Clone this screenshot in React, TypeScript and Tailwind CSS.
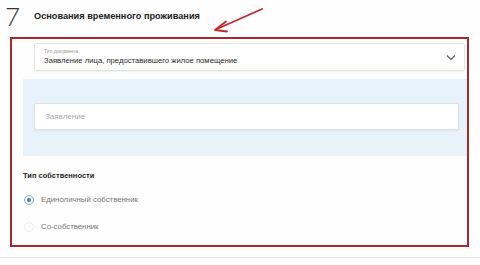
import React from "react";

export default function App() {
  return (
    <div
      className="relative w-[480px] h-[265px] overflow-hidden bg-[#fdfefd]"
      style={{ fontFamily: '"Liberation Sans", Arial, sans-serif' }}
    >
      {/* header */}
      <div className="flex items-center h-[34px] pl-[5px]">
        <span
          className="text-[26px] leading-none font-light text-[#333] w-[29px] -mt-[2px]"
          style={{ fontFamily: 'Lato, "Liberation Sans", sans-serif' }}
        >
          7
        </span>
        <span className="text-[9.2px] font-bold text-[#222] -mt-[1px]">
          Основания временного проживания
        </span>
      </div>

      {/* annotation arrow */}
      <svg
        className="absolute left-[205px] top-[4px]"
        width="62"
        height="32"
        viewBox="0 0 62 32"
      >
        <line x1="57" y1="5" x2="12" y2="25" stroke="#c0282d" strokeWidth="1.8" strokeLinecap="round" />
        <path d="M10 26 L21 17.5 M10 26 L22 27.5" stroke="#c0282d" strokeWidth="1.8" strokeLinecap="round" fill="none" />
      </svg>

      {/* red annotation frame with form */}
      <div className="ml-[10px] mt-[3px] w-[459px] h-[210px] border-2 border-[#a8282c] flex flex-col">
        {/* select */}
        <div className="ml-[22px] mr-[2px] mt-[4px] h-[28px] bg-white border border-[#e4e6e6] rounded-[2px] shadow-[0_1px_2px_rgba(0,0,0,0.06)] flex items-center pl-[9px] pr-[8px]">
          <div className="flex-1 flex flex-col">
            <span className="text-[5px] leading-[6px] text-[#9a9a9a]">Тип документа</span>
            <span className="text-[7.7px] leading-[11px] text-[#2a2a2a] mt-[1px]">
              Заявление лица, предоставившего жилое помещение
            </span>
          </div>
          <svg width="10" height="7" viewBox="0 0 10 7">
            <path d="M1 1.5 L5 5.5 L9 1.5" stroke="#555" strokeWidth="1.1" fill="none" />
          </svg>
        </div>

        {/* blue area */}
        <div className="ml-[11px] mt-[8px] h-[77px] bg-[#e6f3fa] pt-[24px] pl-[11px] pr-[8px]">
          <div className="h-[27px] bg-white border border-[#dfe3e4] rounded-[2px] shadow-[0_1px_2px_rgba(0,0,0,0.05)] flex items-center pl-[10px]">
            <span className="text-[8px] text-[#a9a9a9]">Заявление</span>
          </div>
        </div>

        <div className="ml-[11px] mt-[14px] text-[7.5px] font-bold text-[#1e1e1e]">Тип собственности</div>

        <div className="ml-[12px] mt-[13px] flex items-center gap-[7px]">
          <span className="w-[10px] h-[10px] rounded-full border border-[#8fb3d0] bg-[#eef4f9] flex items-center justify-center">
            <span className="w-[4px] h-[4px] rounded-full bg-[#4f7fa8]" />
          </span>
          <span className="text-[7.8px] text-[#777]">Единоличный собственник</span>
        </div>
        <div className="ml-[12px] mt-[15px] flex items-center gap-[7px]">
          <span className="w-[10px] h-[10px] rounded-full border border-[#ececec] bg-white" />
          <span className="text-[7.8px] text-[#777]">Со-собственник</span>
        </div>
      </div>

      <div className="mt-[10px] h-px bg-[#e6e6e6]" />
    </div>
  );
}
